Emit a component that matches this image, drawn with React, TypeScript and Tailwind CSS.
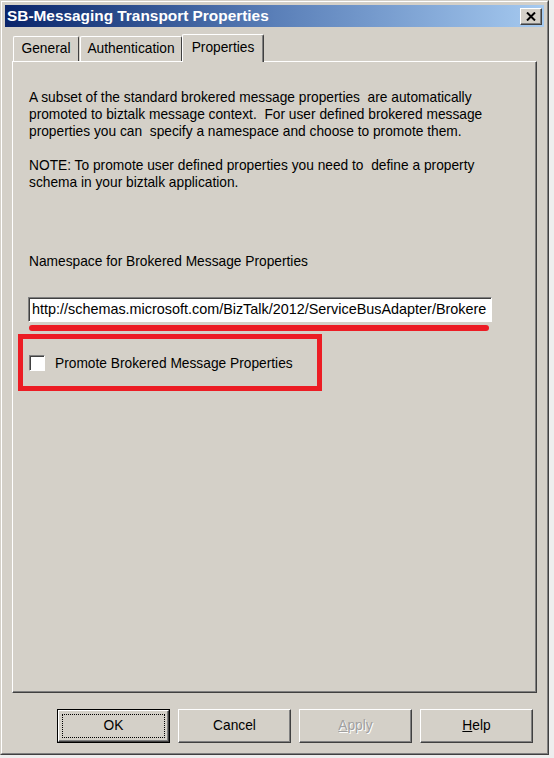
import React from "react";

const raised =
  "border border-t-white border-l-white border-r-[#404040] border-b-[#404040] shadow-[inset_-1px_-1px_#808080]";

function DialogButton({
  children,
  isDefault,
}: {
  children: React.ReactNode;
  isDefault?: boolean;
}) {
  if (isDefault) {
    return (
      <div className="w-[113px] h-[34px] border border-black">
        <div className={`h-full ${raised} flex items-center justify-center p-[3px]`}>
          <div className="w-full h-full border border-dotted border-black flex items-center justify-center">
            {children}
          </div>
        </div>
      </div>
    );
  }
  return (
    <div className={`w-[113px] h-[34px] ${raised} flex items-center justify-center`}>
      {children}
    </div>
  );
}

export default function App() {
  const lines = [
    "A subset of the standard brokered message properties  are automatically",
    "promoted to biztalk message context.  For user defined brokered message",
    "properties you can  specify a namespace and choose to promote them.",
    " ",
    "NOTE: To promote user defined properties you need to  define a property",
    "schema in your biztalk application.",
  ];

  return (
    <div
      className="w-[554px] h-[758px] bg-[#eeeeee] text-black text-[13.75px]"
      style={{ fontFamily: '"Liberation Sans", Arial, sans-serif' }}
    >
      {/* window frame */}
      <div className="w-[549px] h-[755px] bg-[#d4d0c8] border border-t-[#d4d0c8] border-l-[#d4d0c8] border-r-[#404040] border-b-[#404040]">
        <div className="h-full border border-t-white border-l-white border-r-[#808080] border-b-[#808080] p-[3px] flex flex-col">
          {/* title bar */}
          <div className="h-[22px] flex items-center justify-between pl-[2px] pr-[2px] bg-gradient-to-r from-[#0a246a] via-[#5a7fb8] to-[#a6caf0]">
            <span className="text-white font-bold text-[15.4px] leading-none">
              SB-Messaging Transport Properties
            </span>
            <div className={`w-[22px] h-[17px] bg-[#d4d0c8] ${raised} flex items-center justify-center`}>
              <svg width="10" height="9" viewBox="0 0 10 9">
                <path d="M1 0.5 L9 8.5 M9 0.5 L1 8.5" stroke="#000" strokeWidth="2" />
              </svg>
            </div>
          </div>

          {/* tabs */}
          <div className="px-[7px] mt-[7px] flex flex-col">
            <div className="h-[27px] flex items-end">
              <div className="ml-[1px] w-[66px] h-[25px] border-t border-l border-r border-t-white border-l-white border-r-[#404040] rounded-t-[2px] flex items-center justify-center">
                General
              </div>
              <div className="ml-[1px] w-[102px] h-[25px] border-t border-l border-r border-t-white border-l-white border-r-[#404040] rounded-t-[2px] flex items-center justify-center">
                Authentication
              </div>
              <div className="relative z-10 -mb-[1px] w-[82px] h-[28px] bg-[#d4d0c8] border-t border-l border-r border-t-white border-l-white border-r-[#404040] rounded-t-[2px] shadow-[inset_-1px_0_#808080] flex items-start justify-center pt-[3px]">
                Properties
              </div>
            </div>

            {/* tab page */}
            <div className="h-[632px] border border-t-white border-l-white border-r-[#404040] border-b-[#404040] shadow-[inset_-1px_-1px_#808080] flex flex-col">
              <div className="pl-[16px] pt-[27px] leading-[17px]">
                {lines.map((l, i) => (
                  <div key={i} className="whitespace-pre">
                    {l}
                  </div>
                ))}
              </div>

              <div className="pl-[16px] mt-[62px] leading-[17px]">
                Namespace for Brokered Message Properties
              </div>

              <div className="ml-[15px] mt-[27px] w-[464px] h-[25px] bg-white border border-t-[#808080] border-l-[#808080] border-r-white border-b-white shadow-[inset_1px_1px_#404040] overflow-hidden flex items-center pl-[3px]">
                <span className="whitespace-nowrap text-[14.4px]">
                  http://schemas.microsoft.com/BizTalk/2012/ServiceBusAdapter/Brokere
                </span>
              </div>

              <div className="ml-[16px] mt-[3px] w-[460px] h-[6px] rounded-full bg-[#ec1c24]" />

              <div className="ml-[5px] mt-[3px] w-[304px] h-[57px] border-[5px] border-[#ec1c24] flex items-center pl-[6px]">
                <div className="w-[16px] h-[16px] bg-white border border-t-[#808080] border-l-[#808080] border-r-white border-b-white shadow-[inset_1px_1px_#404040]" />
                <span className="ml-[10px] mt-[3px]">Promote Brokered Message Properties</span>
              </div>
            </div>
          </div>

          {/* buttons */}
          <div className="mt-[16px] flex justify-end gap-[8px] pr-[11px]">
            <DialogButton isDefault>OK</DialogButton>
            <DialogButton>Cancel</DialogButton>
            <DialogButton>
              <span className="text-[#a0a0a0] [text-shadow:1px_1px_0_#ffffff]">
                <span className="underline">A</span>pply
              </span>
            </DialogButton>
            <DialogButton>
              <span>
                <span className="underline">H</span>elp
              </span>
            </DialogButton>
          </div>
        </div>
      </div>
    </div>
  );
}
